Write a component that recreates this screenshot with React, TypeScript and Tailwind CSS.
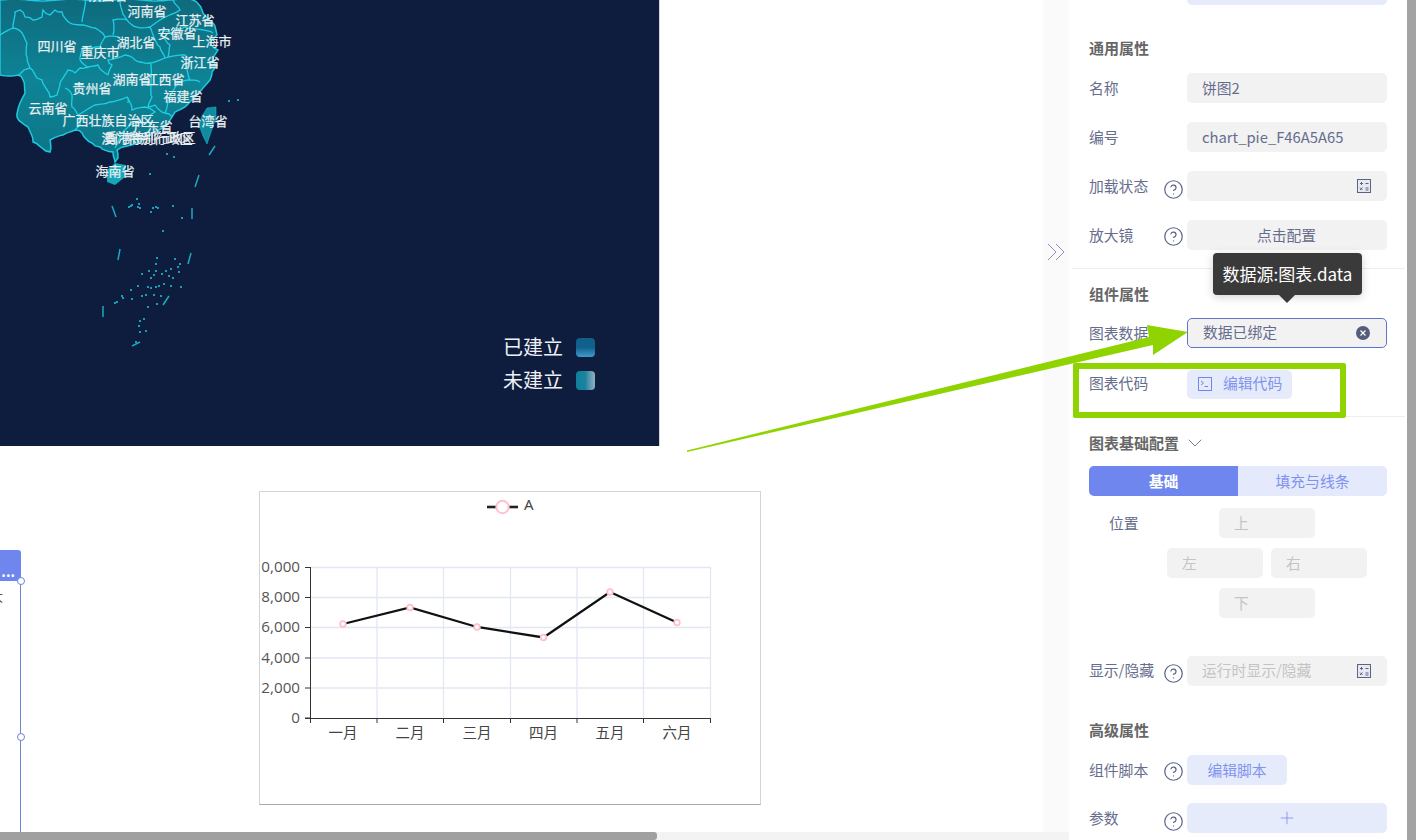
import React from 'react';
import { CircleHelp, Plus, ChevronDown } from 'lucide-react';

const outline =
  '0,0 193,0 202,10 213,23 217,35 210,42 218,50 213,58 217,65 212,72 210,80 203,88 195,97 185,107 175,112 172,117 165,127 153,133 140,142 123,147 117,150 118,158 115,162 113,152 100,147 92,143 82,133 75,130 63,135 50,140 50,152 42,148 33,142 28,127 17,117 20,103 25,93 23,80 18,75 0,75';

const borders = [
  '0,35 13,28 15,12 20,10 25,17 33,20 42,17 43,10 50,15 55,10 62,12 70,23 80,25 95,28 105,37 118,37',
  '13,28 22,33 27,43 27,57 30,68 24,70 19,75',
  '30,68 37,78 42,80 50,97 57,95 60,83 68,70 75,73 80,68 88,67 98,65 108,75',
  '80,60 83,48 100,47 105,37',
  '80,60 88,68',
  '65,88 72,95 72,107 78,115 95,105 110,102 127,97 128,103',
  '78,115 80,125 75,130',
  '127,97 132,110 145,107 155,112 150,115 130,125 122,133 115,148',
  '150,63 152,97 148,107 155,105 165,113 172,117',
  '108,75 112,65 108,60 125,55 135,60 150,63 165,58 185,55 190,60 187,70 190,80 200,82',
  '190,80 178,83 168,100 165,113',
  '113,35 113,20 127,20 137,27 150,27 160,47 165,58',
  '120,0 125,17 127,20',
  '85,0 82,22',
  '173,0 180,10 160,20 150,27',
  '160,30 170,33 185,27 213,33',
  '160,33 170,45 168,57',
];

// breaks a straight border into short uneven steps, the real map is not smooth
function jag(line: string) {
  const pts = line.split(' ').map((p) => p.split(',').map(Number));
  const out: string[] = [line.split(' ')[0]];
  for (let i = 1; i < pts.length; i++) {
    const [ax, ay] = pts[i - 1];
    const [bx, by] = pts[i];
    const steps = Math.max(1, Math.floor(Math.hypot(bx - ax, by - ay) / 3));
    for (let s = 1; s <= steps; s++) {
      const k = s / steps;
      const w = s === steps ? 0 : Math.sin((ax + by) * 7 + s * 12.9) * 0.9;
      out.push(`${(ax + (bx - ax) * k + w).toFixed(1)},${(ay + (by - ay) * k - w).toFixed(1)}`);
    }
  }
  return out.join(' ');
}

const dashes = [
  [215, 146, 209, 155],
  [199, 175, 195, 187],
  [192, 208, 192, 219],
  [191, 253, 188, 264],
  [169, 296, 163, 305],
  [140, 342, 132, 346],
  [103, 306, 103, 317],
  [120, 249, 118, 260],
  [112, 206, 116, 217],
];

const islands = [
  [228, 100], [237, 99], [166, 153], [173, 156], [132, 170], [149, 173], [130, 205], [136, 198], [131, 204], [138, 203], [128, 206],
  [137, 206], [139, 207], [152, 207], [155, 206], [157, 207], [150, 211], [181, 217], [172, 205], [162, 230], [156, 257],
  [155, 263], [174, 258], [179, 263], [177, 266], [148, 270], [155, 270], [165, 270], [170, 268], [178, 271], [161, 273],
  [168, 275], [172, 277], [153, 274], [141, 273], [150, 277], [137, 285], [147, 286], [150, 287], [155, 286], [158, 285],
  [163, 283], [170, 285], [180, 286], [130, 289], [141, 295], [145, 294], [160, 295], [153, 294], [131, 298], [121, 295],
  [116, 301], [114, 302], [122, 297], [156, 303], [147, 306], [143, 318], [139, 320], [138, 325], [139, 331], [145, 330],
  [135, 341],
];

const labels: [string, number, number][] = [
  ['陕西省', 108, 0],
  ['河南省', 147, 16],
  ['江苏省', 195, 25],
  ['安徽省', 177, 38],
  ['上海市', 212, 46],
  ['四川省', 57, 51],
  ['重庆市', 100, 57],
  ['湖北省', 136, 47],
  ['浙江省', 200, 67],
  ['湖南省', 132, 84],
  ['江西省', 165, 84],
  ['贵州省', 92, 93],
  ['福建省', 183, 101],
  ['云南省', 48, 113],
  ['广西壮族自治区', 108, 125],
  ['广东省', 153, 131],
  ['台湾省', 208, 126],
  ['澳门特别行政区', 147, 143],
  ['香港特别行政区', 150, 142],
  ['海南省', 115, 176],
];

function MapDrawing() {
  return (
    <svg width="660" height="446" className="absolute left-0 top-0">
      <defs>
        <linearGradient id="land" x1="0" y1="0" x2="0" y2="1">
          <stop offset="0" stopColor="#0f6a7d" />
          <stop offset="0.5" stopColor="#0e8496" />
          <stop offset="1" stopColor="#0d7487" />
        </linearGradient>
      </defs>
      <polygon points={jag(outline)} fill="url(#land)" stroke="#1ec8de" strokeWidth="1.5" />
      {borders.map((b) => (
        <polyline key={b} points={jag(b)} fill="none" stroke="#1fcfe5" strokeWidth="1.3" />
      ))}
      <polygon points="207,108 216,107 216,118 211,132 207,144 203,136 199,125 202,116" fill="#0f8ca0" stroke="#18b5cb" strokeWidth="0.6" />
      <polygon points="107,170 115,163 126,165 125,177 115,185 107,182" fill="#12a8ba" />
      {dashes.map(([x1, y1, x2, y2]) => (
        <line key={x1 + '-' + y1} x1={x1} y1={y1} x2={x2} y2={y2} stroke="#1ba9c4" strokeWidth="1.5" />
      ))}
      {islands.map(([x, y]) => (
        <rect key={x + '-' + y} x={x} y={y} width="2" height="2" fill="#1a9db8" />
      ))}
      {labels.map(([t, x, y]) => (
        <text key={t} x={x} y={y} textAnchor="middle" fontSize="13" fill="#f0f3f6" stroke="#dfe6ea" strokeWidth="0.25">
          {t}
        </text>
      ))}
    </svg>
  );
}

const chartX = [310.5, 377, 443.5, 510.5, 577, 643.5, 710.5];
const chartY = [567.5, 597.5, 627.5, 658, 688, 718];
const yNames = ['0,000', '8,000', '6,000', '4,000', '2,000', '0'];
const months = ['一月', '二月', '三月', '四月', '五月', '六月'];
const monthX = [343, 410, 477, 543.5, 610, 677];
const points: [number, number][] = [
  [343, 624],
  [410, 607.5],
  [477, 627],
  [543.5, 637.5],
  [610, 592],
  [677, 622.5],
];

// viewBox keeps page coordinates, the chart box starts at 260,492
function LineChart() {
  return (
    <svg width="500" height="312" viewBox="260 492 500 312" className="block">
      <line x1="487" y1="507" x2="518" y2="507" stroke="#222" strokeWidth="2.6" />
      <circle cx="502.5" cy="507" r="6.2" fill="#fff" stroke="#ffc0cb" strokeWidth="2" />
      <text x="524" y="510" fontSize="15" fill="#444" fontFamily="'Noto Sans', sans-serif">
        A
      </text>
      {chartY.slice(0, 5).map((y) => (
        <line key={y} x1="310" y1={y} x2="711" y2={y} stroke="#e3e7f4" strokeWidth="1.3" />
      ))}
      {chartX.slice(1).map((x) => (
        <line key={x} x1={x} y1="567" x2={x} y2="718" stroke="#e3e7f4" strokeWidth="1.3" />
      ))}
      <line x1="310.5" y1="567" x2="310.5" y2="723" stroke="#333" />
      <line x1="305" y1="718.5" x2="711" y2="718.5" stroke="#333" />
      {chartY.map((y) => (
        <line key={y} x1="305" y1={y} x2="310" y2={y} stroke="#333" />
      ))}
      {chartX.map((x) => (
        <line key={x} x1={x} y1="718" x2={x} y2="723" stroke="#333" />
      ))}
      {yNames.map((n, i) => (
        <text key={n} x="300" y={chartY[i] + 4.5} textAnchor="end" fontSize="15.2" fill="#555" fontFamily="'Open Sans', sans-serif">
          {n}
        </text>
      ))}
      {months.map((m, i) => (
        <text key={m} x={monthX[i]} y="738" textAnchor="middle" fontSize="14.5" fill="#444">
          {m}
        </text>
      ))}
      <polyline points={points.map((p) => p.join(',')).join(' ')} fill="none" stroke="#111" strokeWidth="2.3" />
      {points.map(([x, y]) => (
        <circle key={x} cx={x} cy={y} r="2.8" fill="#fff" stroke="#ffc0cb" strokeWidth="1.8" />
      ))}
    </svg>
  );
}

function CalcIcon() {
  return (
    <svg width="14" height="14" viewBox="0 0 14 14" fill="none" stroke="#5a6488" strokeWidth="1" className="mt-[-1px]">
      <rect x="0.5" y="0.5" width="13" height="13" fill="#e8e9ee" />
      <path d="M3 4.5h3M4.5 3v3M8.5 4.5h3M3 8.5l2.5 2.5M5.5 8.5L3 11M8.5 9h3M8.5 11h3" />
    </svg>
  );
}

function TerminalIcon() {
  return (
    <svg width="14" height="14" viewBox="0 0 14 14" fill="none" stroke="#6f86ee" strokeWidth="1">
      <rect x="0.5" y="0.5" width="13" height="13" />
      <path d="M3 4l2.5 2L3 8M6.5 9.5H10" />
    </svg>
  );
}

function Row({
  label,
  help,
  className,
  labelClass,
  children,
}: {
  label: string;
  help?: string;
  className?: string;
  labelClass?: string;
  children: React.ReactNode;
}) {
  return (
    <div className={`relative flex h-[30px] items-center ${className ?? ''}`}>
      <div className={`w-[98px] shrink-0 text-[14.8px] text-[#666d8c] ${labelClass ?? ''}`}>{label}</div>
      {help && <CircleHelp size={21} strokeWidth={1.4} className={`absolute left-[74px] text-[#5a6488] ${help}`} />}
      {children}
    </div>
  );
}

function Field({ children, className }: { children?: React.ReactNode; className?: string }) {
  return (
    <div className={`flex h-[30px] w-[200px] items-center justify-between rounded-[5px] bg-[#f2f2f3] pl-[15px] pr-[16px] text-[14.8px] text-[#666d8c] ${className ?? ''}`}>
      {children}
    </div>
  );
}

function Heading({ children, className }: { children: React.ReactNode; className?: string }) {
  return <div className={`h-[22px] text-[15px] font-bold leading-[22px] text-[#666666] ${className ?? ''}`}>{children}</div>;
}

function PosInput({ name }: { name: string }) {
  return <div className="flex h-[30px] w-[96px] items-center rounded-[5px] bg-[#f2f2f3] pl-[15px] text-[14.8px] text-[#c4c4c4]">{name}</div>;
}

function Panel() {
  return (
    <div className="h-full w-[338px] shrink-0 overflow-hidden bg-white">
      <div className="ml-[118px] mt-[-25px] h-[30px] w-[200px] rounded-[5px] bg-[#e6ebfb]" />
      <div className="pl-[20px]">
        <Heading className="mt-[32px]">通用属性</Heading>
        <Row label="名称" className="mt-[14px]">
          <Field>饼图2</Field>
        </Row>
        <Row label="编号" className="mt-[19px]">
          <Field>chart_pie_F46A5A65</Field>
        </Row>
        <Row label="加载状态" help="top-[7.5px]" className="mt-[19px]">
          <Field className="justify-end">
            <CalcIcon />
          </Field>
        </Row>
        <Row label="放大镜" help="top-[6px]" className="mt-[19px]">
          <Field className="justify-center">点击配置</Field>
        </Row>
      </div>
      <div className="ml-[3px] mr-[2px] mt-[18px] h-px bg-[#eeeeee]" />
      <div className="pl-[20px]">
        <Heading className="mt-[14px]">组件属性</Heading>
        <Row label="图表数据" className="mt-[13px]">
          <Field className="border border-[#5f73c9] pl-[14px] pr-[15px]">
            <span className="mt-[-2px]">数据已绑定</span>
            <span className="flex h-[14px] w-[14px] items-center justify-center rounded-full bg-[#555c7e]">
              <svg width="8" height="8" viewBox="0 0 8 8" stroke="#fff" strokeWidth="1.2">
                <path d="M1.5 1.5l5 5M6.5 1.5l-5 5" />
              </svg>
            </span>
          </Field>
        </Row>
        <Row label="图表代码" className="mt-[21px]" labelClass="mt-[-2px]">
          <div className="flex h-[29px] w-[105px] items-center gap-[11px] rounded-[5px] bg-[#e6ebfb] pl-[11px] text-[14.8px] text-[#7f93ee]">
            <TerminalIcon />
            <span className="mt-[-1px]">编辑代码</span>
          </div>
        </Row>
      </div>
      <div className="ml-[3px] mr-[2px] mt-[17px] h-px bg-[#eeeeee]" />
      <div className="pl-[20px]">
        <div className="mt-[15px] flex items-center gap-[4px]">
          <Heading>图表基础配置</Heading>
          <ChevronDown size={24} strokeWidth={0.8} className="my-[-1px] text-[#555c7e]" />
        </div>
        <div className="mt-[12px] flex h-[30px] w-[298px] overflow-hidden rounded-[5px] text-[14.8px]">
          <div className="flex w-[149px] items-center justify-center bg-[#6f86ee] font-bold text-white">基础</div>
          <div className="flex w-[149px] items-center justify-center bg-[#e4e9fb] text-[#7f93ee]">填充与线条</div>
        </div>
        <div className="relative mt-[12px] h-[110px] w-[298px]">
          <div className="absolute left-[20px] top-[4px] text-[14.8px] text-[#666d8c]">位置</div>
          <div className="flex flex-col gap-[10px] pl-[78px]">
            <div className="flex justify-center gap-[8px] pr-[20px]">
              <PosInput name="上" />
            </div>
            <div className="flex justify-center gap-[8px] pr-[20px]">
              <PosInput name="左" />
              <PosInput name="右" />
            </div>
            <div className="flex justify-center gap-[8px] pr-[20px]">
              <PosInput name="下" />
            </div>
          </div>
        </div>
        <Row label="显示/隐藏" help="top-[6.5px]" className="mt-[38px]" labelClass="mt-[-1px]">
          <Field className="text-[#c4c4c4]">
            <span className="mt-[-2px]">运行时显示/隐藏</span>
            <CalcIcon />
          </Field>
        </Row>
        <Heading className="mt-[33px]">高级属性</Heading>
        <Row label="组件脚本" help="top-[5.5px]" className="mt-[14px]">
          <div className="flex h-[30px] w-[100px] items-center justify-center rounded-[5px] bg-[#e6ebfb] text-[14.8px] text-[#7f93ee]">编辑脚本</div>
        </Row>
        <Row label="参数" help="top-[7.5px]" className="mt-[18px]">
          <div className="flex h-[30px] w-[200px] items-center justify-center rounded-[5px] bg-[#e6ebfb]">
            <Plus size={20} strokeWidth={0.9} className="text-[#6f86ee]" />
          </div>
        </Row>
      </div>
    </div>
  );
}

export default function App() {
  return (
    <div className="relative flex h-[840px] w-[1416px] overflow-hidden bg-white font-['Noto_Sans_CJK_SC','Noto_Sans',sans-serif]">
      <div className="flex h-full w-[1069px] shrink-0 flex-col">
        <div className="flex h-[832px] w-full">
          {/* canvas, items sit at their own place on it */}
          <div className="relative h-full flex-1 overflow-hidden bg-white">
            <div className="absolute left-0 top-0 h-[446px] w-[660px] border-r border-[#d6d6d6] bg-[#0e1c3d]">
              <MapDrawing />
              <div className="absolute left-[503px] top-[334px] flex flex-col gap-[7px]">
                <div className="flex h-[26px] items-center gap-[13px] text-[20px] text-[#eef0f4]">
                  已建立
                  <span className="h-[19px] w-[19px] rounded-[4px] bg-gradient-to-b from-[#0f5f88] via-[#11618c] to-[#3f9ccb]" />
                </div>
                <div className="flex h-[26px] items-center gap-[13px] text-[20px] text-[#eef0f4]">
                  未建立
                  <span className="h-[19px] w-[19px] rounded-[4px] bg-gradient-to-r from-[#0f7f9c] via-[#1a84a0] to-[#8fb0bd]" />
                </div>
              </div>
            </div>
            <div className="absolute left-[259px] top-[491px] h-[314px] w-[502px] border border-[#d4d4d4] border-b-[#aaaaaa] bg-white">
              <LineChart />
            </div>
            <div className="absolute left-0 top-[550px] flex h-[31px] w-[21px] items-end justify-end rounded-tr-[3px] bg-[#6f86ee] pb-[3px] pr-[6px] text-[14px] font-bold leading-[14px] text-white">
              ...
            </div>
            <div className="absolute left-[-10px] top-[586px] text-[13px] text-[#555555]">大</div>
            <div className="absolute left-[20px] top-[581px] h-[251px] w-px bg-[#6f83d8]" />
            <div className="absolute left-[17px] top-[577px] h-[8px] w-[8px] rounded-full border border-[#6f83d8] bg-white" />
            <div className="absolute left-[17px] top-[733px] h-[8px] w-[8px] rounded-full border border-[#6f83d8] bg-white" />
          </div>
          <div className="flex h-full w-[26px] shrink-0 justify-center bg-[#fafafa] pt-[243px]">
            <svg width="19" height="18" viewBox="0 0 19 18" fill="none" stroke="#8a93c0" strokeWidth="1">
              <path d="M1 1l8 8-8 8M9 1l8 8-8 8" />
            </svg>
          </div>
        </div>
        <div className="h-[8px] w-full bg-[#f3f3f3]">
          <div className="h-full w-[657px] rounded-r-[3px] bg-[#a0a0a0]" />
        </div>
      </div>
      <Panel />
      <div className="h-full w-[9px] shrink-0 bg-[#a3a3a3]" />

      {/* tooltip over the data field */}
      <div className="absolute left-[1213px] top-[253px] flex h-[42px] w-[149px] items-center justify-center rounded-[4px] bg-[#3a3a3a] text-[17px] text-white shadow-[0_2px_10px_rgba(0,0,0,0.18)]">
        数据源:图表.data
        <span className="absolute left-[66px] top-[42px] h-0 w-0 border-x-[8px] border-t-[8px] border-x-transparent border-t-[#3a3a3a]" />
      </div>

      {/* green annotation drawn on top of the shot */}
      <svg width="1416" height="840" className="pointer-events-none absolute left-0 top-0">
        <polygon points="687,450.5 1149,337 1147,325 1188,332 1153,355 1153,345 687,452" fill="#8fd400" />
      </svg>
      <div className="pointer-events-none absolute left-[1073px] top-[363px] h-[55px] w-[273px] rounded-[2px] border-[6px] border-[#8fd400]" />
    </div>
  );
}
